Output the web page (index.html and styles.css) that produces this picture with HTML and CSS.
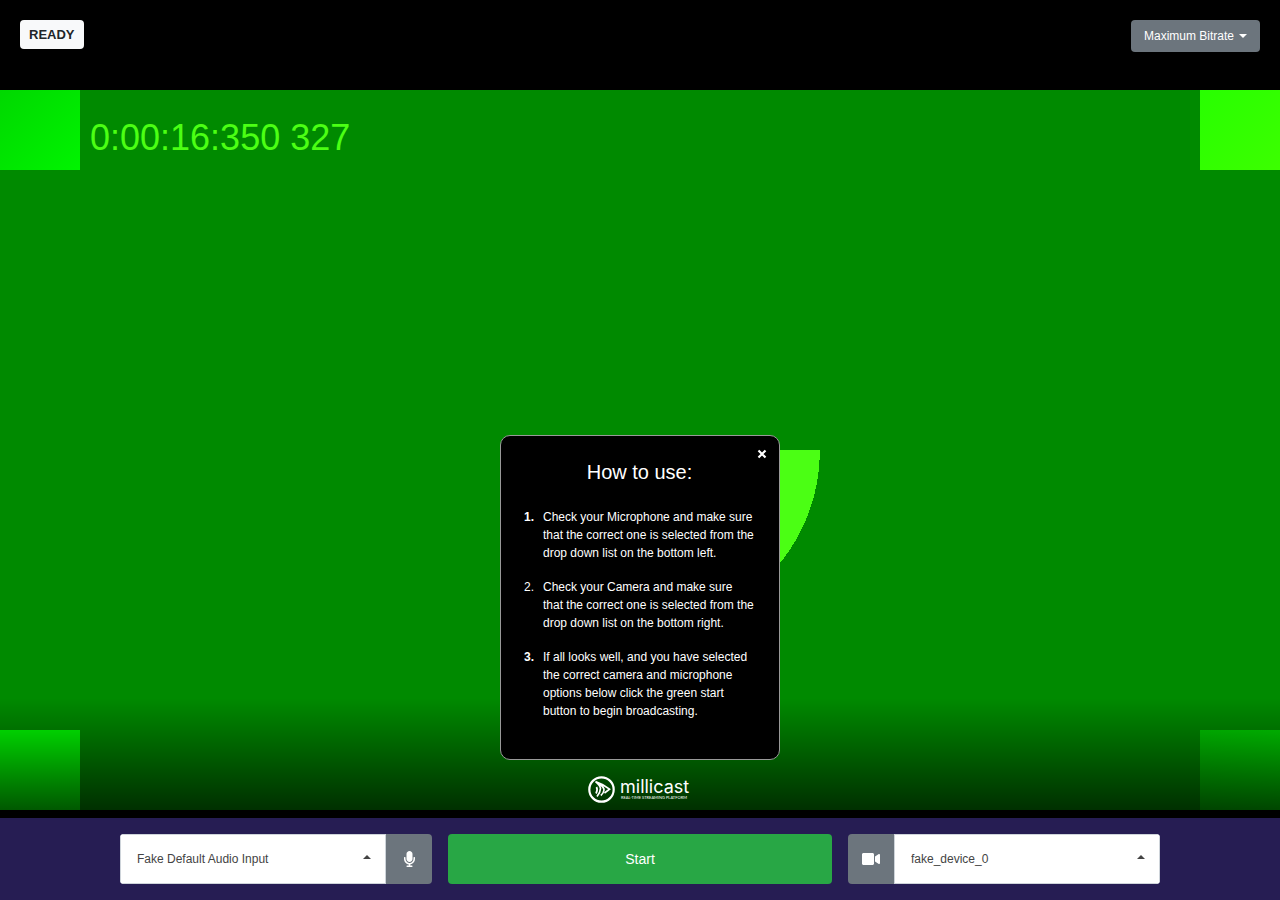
FILE: index.html
```html
<!DOCTYPE html>
<html lang="en">
<head>
<meta charset="utf-8">
<meta name="viewport" content="width=device-width, initial-scale=1">
<title>Millicast Publisher</title>
<link rel="stylesheet" href="styles.css">
</head>
<body>
<main class="app">
  <svg class="video" viewBox="0 0 1280 720" role="img" aria-label="Camera preview">
    <defs>
      <linearGradient id="tl" x2="1" y2="1"><stop stop-color="#00d800"/><stop offset="1" stop-color="#00f400"/></linearGradient>
      <linearGradient id="tr" x2="1" y2="1"><stop stop-color="#28ff00"/><stop offset="1" stop-color="#3cff00"/></linearGradient>
      <linearGradient id="br" x1="0" y1="1" x2="1" y2="0"><stop stop-color="#00c400"/><stop offset="1" stop-color="#00d200"/></linearGradient>
    </defs>
    <rect width="1280" height="720" fill="#008a00"/>
    <rect width="80" height="80" fill="url(#tl)"/>
    <rect x="1200" width="80" height="80" fill="url(#tr)"/>
    <rect y="640" width="80" height="80" fill="#00ff00"/>
    <rect x="1200" y="640" width="80" height="80" fill="url(#br)"/>
    <path d="M640 360H820A180 180 0 0 1 640 540Z" fill="#4bff14" shape-rendering="crispEdges"/>
    <text class="timer" x="90" y="60">0:00:16:350 327</text>
  </svg>

  <header class="topbar">
    <span class="badge">READY</span>
    <div class="picker picker-bitrate">
      <select class="select" aria-label="Bitrate"><option>Maximum Bitrate</option></select>
    </div>
  </header>

  <section class="guide" aria-labelledby="guide-title">
    <button class="close" type="button" aria-label="Close">
      <svg class="close-icon" viewBox="0 0 10 10"><path d="M1.5 1.5l7 7M8.5 1.5l-7 7"/></svg>
    </button>
    <h1 class="guide-title" id="guide-title">How to use:</h1>
    <ol class="steps">
      <li class="step"><b class="num">1.</b><span>Check your Microphone and make sure that the correct one is selected from the drop down list on the bottom left.</span></li>
      <li class="step"><span class="num">2.</span><span>Check your Camera and make sure that the correct one is selected from the drop down list on the bottom right.</span></li>
      <li class="step"><b class="num">3.</b><span>If all looks well, and you have selected the correct camera and microphone options below click the green start button to begin broadcasting.</span></li>
    </ol>
  </section>

  <div class="brand">
    <svg class="logo" viewBox="0 0 104 27" role="img" aria-label="millicast real-time streaming platform">
      <circle cx="13.5" cy="13.5" r="12.2" fill="none" stroke="#fff" stroke-width="2.2"/>
      <path d="M7.5 5.5Q15 8 21.5 13.2L16.500 17M7.5 5.5Q12 9 12.500 12.500Q12.200 17 9 20.500M11.500 8Q16.200 11.500 16 14Q15.500 17.500 12.800 19.500M8.500 11Q10 14 8 17.500" fill="none" stroke="#fff" stroke-width="1.700"/>
      <text class="logo-name" x="32" y="17">millicast</text>
      <text class="logo-tag" x="33" y="23">REAL-TIME STREAMING PLATFORM</text>
    </svg>
  </div>

  <footer class="controls">
    <div class="control-grid">
      <div class="group">
        <div class="picker picker-device">
          <select class="select" aria-label="Microphone"><option>Fake Default Audio Input</option></select>
        </div>
        <button class="toggle" type="button" aria-label="Mute microphone">
          <svg class="mic" viewBox="0 0 352 512"><path fill="currentColor" d="M176 352c53 0 96-43 96-96V96c0-53-43-96-96-96S80 43 80 96v160c0 53 43 96 96 96zm160-160h-16c-9 0-16 7-16 16v48c0 75-64 135-140 127-66-6-116-66-116-133v-42c0-9-7-16-16-16H16c-9 0-16 7-16 16v40c0 90 64 170 152 182v34H96c-9 0-16 7-16 16v16c0 9 7 16 16 16h160c9 0 16-7 16-16v-16c0-9-7-16-16-16h-56v-34c86-12 152-85 152-174v-48c0-9-7-16-16-16z"/></svg>
        </button>
      </div>
      <button class="start" type="button">Start</button>
      <div class="group">
        <button class="toggle" type="button" aria-label="Turn off camera">
          <svg class="cam" viewBox="0 0 576 448"><path fill="currentColor" d="M336 32H48C21 32 0 53 0 80v288c0 27 21 48 48 48h288c27 0 48-21 48-48V80c0-27-21-48-48-48zm189 38L416 145v158l109 75c21 15 51 0 51-25V95c0-25-29-40-51-25z"/></svg>
        </button>
        <div class="picker picker-device">
          <select class="select" aria-label="Camera"><option>fake_device_0</option></select>
        </div>
      </div>
    </div>
  </footer>
</main>
</body>
</html>
```
FILE: styles.css
```css
* {
  box-sizing: border-box;
}

body {
  margin: 0;
  background: #000;
  color: #fff;
  font: 12px/18px "Liberation Sans", Arial, sans-serif;
}

button,
select {
  font: inherit;
  color: inherit;
  border: 0;
  margin: 0;
  cursor: pointer;
}

.app {
  position: relative;
  isolation: isolate;
  min-height: 100vh;
  display: flex;
  flex-direction: column;
}

/* The preview fills the window behind all the controls. */
.video {
  position: absolute;
  inset: 0;
  width: 100%;
  height: 100%;
  z-index: -2;
}

.timer {
  font: 36px "Liberation Sans", Arial, sans-serif;
  fill: #4bff14;
}

.topbar {
  display: flex;
  justify-content: space-between;
  align-items: flex-start;
  padding: 20px;
  margin-bottom: auto;
}

.badge {
  padding: 6px 9px;
  border-radius: 4px;
  background: #f8f9fa;
  color: #212529;
  font-size: 13px;
  line-height: 17px;
  font-weight: bold;
}

.picker {
  position: relative;
}

.select {
  appearance: none;
  width: 100%;
  background: transparent;
}

.picker::after {
  content: "";
  position: absolute;
  border: 4px solid transparent;
  pointer-events: none;
}

.picker-bitrate {
  border-radius: 4px;
  background: #6c757d;
}

.picker-bitrate .select {
  height: 32px;
  padding: 0 25px 0 13px;
}

.picker-bitrate::after {
  top: 14px;
  right: 13px;
  border-top-color: #fff;
  border-bottom: 0;
}

.guide {
  position: relative;
  align-self: center;
  width: 280px;
  padding: 24px 24px 23px 23px;
  border: 1px solid #999;
  border-radius: 10px;
  background: #000;
}

.close {
  position: absolute;
  top: 8px;
  right: 7px;
  display: grid;
  place-items: center;
  width: 20px;
  height: 20px;
  padding: 0;
  background: transparent;
}

.close-icon {
  width: 10px;
  height: 10px;
  fill: none;
  stroke: #fff;
  stroke-width: 2.2;
}

.guide-title {
  margin: 0 0 24px;
  font-size: 20px;
  line-height: 24px;
  font-weight: normal;
  text-align: center;
}

.steps {
  list-style: none;
  margin: 0;
  padding: 0;
}

.step {
  display: grid;
  grid-template-columns: 19px 1fr;
  margin-bottom: 16px;
}

.brand {
  position: relative;
  display: flex;
  justify-content: center;
  padding: 16px 0 15px;
}

/* Shade that keeps the logo legible on a bright picture. */
.brand::before {
  content: "";
  position: absolute;
  z-index: -1;
  left: 0;
  right: 0;
  bottom: 0;
  height: 120px;
  background: linear-gradient(transparent, rgba(0, 0, 0, 0.7));
}

.logo {
  width: 104px;
  height: 27px;
  overflow: visible;
}

.logo-name {
  font: 18px Inter, sans-serif;
  fill: #fff;
}

.logo-tag {
  font: 4px Lato, sans-serif;
  fill: #fff;
}

.controls {
  padding: 16px;
  background: #261d53;
}

.control-grid {
  display: grid;
  grid-template-columns: 13fr 16fr 13fr;
  gap: 16px;
  max-width: 1040px;
  margin: 0 auto;
}

.group {
  display: flex;
  height: 50px;
  overflow: hidden;
  border-radius: 4px;
}

.picker-device {
  flex: 1;
  background: #fff;
  border: 1px solid #ced4da;
}

.picker-device .select {
  height: 48px;
  padding: 0 32px 0 16px;
  color: #444;
}

.picker-device::after {
  top: 20px;
  right: 14px;
  border-bottom-color: #444;
  border-top: 0;
}

.toggle {
  display: grid;
  place-items: center;
  width: 46px;
  padding: 0;
  background: #6c757d;
  color: #fff;
}

.mic {
  width: 11px;
  height: 16px;
}

.cam {
  width: 18px;
  height: 14px;
}

.start {
  border-radius: 4px;
  background: #28a745;
  font-size: 14px;
}
```
